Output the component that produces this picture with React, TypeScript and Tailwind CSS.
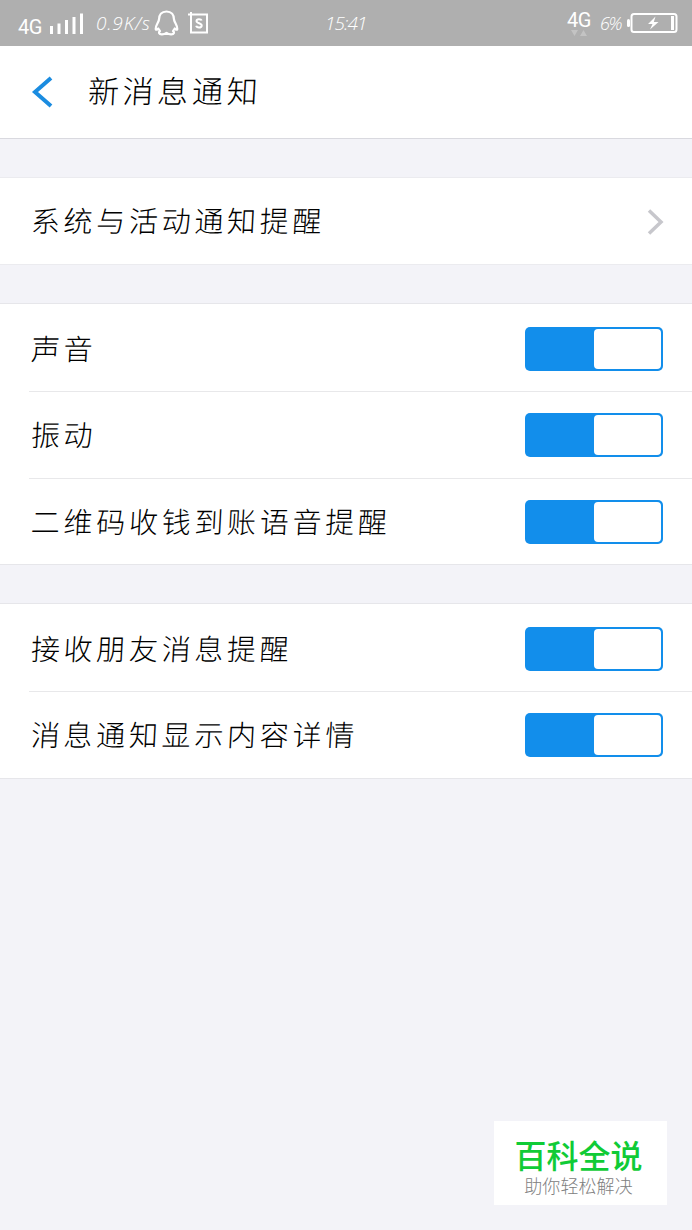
import React from "react";

const cjk = "font-['Noto_Sans_CJK_SC',sans-serif]";

function Toggle() {
  return (
    <button
      type="button"
      role="switch"
      aria-checked="true"
      className="flex h-[44px] w-[138px] justify-end rounded-[5px] bg-[#128eeb] p-[2px]"
    >
      <span className="h-full w-[67px] rounded-[4px] bg-white" />
    </button>
  );
}

function Label({ children }: { children: string }) {
  return (
    <span className="-skew-x-3 whitespace-nowrap pb-[3px] text-[29px] leading-none font-light tracking-[3.7px] text-black">
      {children}
    </span>
  );
}

function Row({ label, className }: { label: string; className: string }) {
  return (
    <div className={`ml-[29px] flex items-center justify-between pr-[29px] pl-[2px] ${className}`}>
      <Label>{label}</Label>
      <Toggle />
    </div>
  );
}

function StatusBar() {
  return (
    <div className="flex h-[46px] shrink-0 items-center bg-[#afafaf] font-['Roboto',sans-serif] text-white">
      <div className="flex w-[325px] items-center pl-[18px]">
        <span className="w-[31px] pt-[7px] text-[20px] leading-none tracking-[-0.5px]">4G</span>
        <svg width="36" height="22" viewBox="0 0 36 22" fill="currentColor" className="shrink-0">
          <rect x="1" y="14" width="3" height="8" />
          <rect x="8.5" y="11.5" width="3" height="10.5" />
          <rect x="16" y="8" width="3" height="14" />
          <rect x="23.5" y="5" width="3" height="17" />
          <rect x="31" y="1.500" width="3" height="20.500" />
        </svg>
        <span className="ml-[11px] w-[58px] whitespace-nowrap font-['Open_Sans',sans-serif] text-[19px] leading-none font-light italic tracking-[0.800px]">
          0.9K/s
        </span>
        <svg width="25" height="26" viewBox="0 0 25 26" fill="none" stroke="currentColor" strokeWidth="2.200" strokeLinejoin="round" className="shrink-0">
          <path d="M12.500 1.500C7.500 1.500 5 5 5 9.500C4.500 13 1.500 15 1.700 19C2 20.500 3.500 19.500 4.300 18.500L6 21C4 22.500 5 24.500 8 24.300C10 24.200 11.500 23.500 12.500 22.800C13.500 23.500 15 24.200 17 24.300C20 24.500 21 22.500 19 21L20.700 18.500C21.500 19.500 23 20.500 23.300 19C23.500 15 20.500 13 20 9.500C20 5 17.500 1.500 12.500 1.500Z" />
        </svg>
        <svg width="21" height="22" viewBox="0 0 21 22" fill="none" stroke="currentColor" strokeWidth="2" className="ml-[9px] shrink-0">
          <path d="M0 2.500H19V20.500H3V0" />
          <path d="M13.700 8.500C13 6.700 8.600 6.500 8.500 9C8.500 11.800 13.800 10.800 13.700 13.600C13.500 16.200 8.700 16 8.200 13.800" />
        </svg>
      </div>
      <span className="w-[242px] pt-px font-['Open_Sans',sans-serif] text-[19px] leading-none font-light italic tracking-[-0.900px]">
        15:41
      </span>
      <div className="flex h-[46px] w-[33px] flex-col pt-[10px]">
        <span className="text-[20px] leading-[20px] tracking-[-0.500px]">4G</span>
        <svg width="20" height="6" viewBox="0 0 20 6" fill="currentColor" className="ml-[3px] opacity-25">
          <path d="M1 0H8L4.500 6ZM10 6L13.500 0L17 6Z" />
        </svg>
      </div>
      <span className="w-[27px] font-['Open_Sans',sans-serif] text-[18px] leading-none font-light italic tracking-[-1.500px]">
        6%
      </span>
      <svg width="51" height="22" viewBox="0 0 51 22" fill="none" className="shrink-0">
        <rect x="0" y="7" width="3" height="8" rx="1.500" fill="currentColor" />
        <rect x="4.500" y="2" width="45" height="18" rx="2.500" stroke="currentColor" strokeWidth="2" />
        <rect x="44" y="4" width="3" height="14" fill="currentColor" />
        <path d="M28.500 4.500L21 12H25.500L23 17.500L31.500 10H26.800Z" fill="currentColor" />
      </svg>
    </div>
  );
}

export default function App() {
  return (
    <div className={`flex h-[1230px] w-[692px] flex-col overflow-hidden bg-[#f3f3f8] ${cjk}`}>
      <StatusBar />
      <header className="flex h-[93px] shrink-0 items-center border-b border-[#d9d9df] bg-white pl-[31px]">
        <svg width="22" height="32" viewBox="0 0 22 32" fill="none" stroke="#1b8ce0" strokeWidth="4" className="shrink-0">
          <path d="M20 2L4 16L20 30" />
        </svg>
        <h1 className="ml-[35px] -skew-x-3 whitespace-nowrap pb-[5px] text-[31px] leading-none font-light tracking-[3.700px] text-black">
          新消息通知
        </h1>
      </header>

      <section className="mt-[38px] flex h-[88px] shrink-0 items-center justify-between border-y border-[#ebebef] bg-white pr-[28px] pl-[31px]">
        <Label>系统与活动通知提醒</Label>
        <svg width="17" height="28" viewBox="0 -2 17 28" fill="none" stroke="#c7c7cc" strokeWidth="3.500" className="shrink-0">
          <path d="M2 1.500L14 13L2 24.500" />
        </svg>
      </section>

      <section className="mt-[38px] shrink-0 border-y border-[#e6e6ea] bg-white">
        <Row label="声音" className="h-[88px] border-b border-[#e8e8ea] pt-[2px]" />
        <Row label="振动" className="h-[87px] border-b border-[#e8e8ea]" />
        <Row label="二维码收钱到账语音提醒" className="h-[85px]" />
      </section>

      <section className="mt-[38px] shrink-0 border-y border-[#e6e6ea] bg-white">
        <Row label="接收朋友消息提醒" className="h-[88px] border-b border-[#e8e8ea] pt-[2px]" />
        <Row label="消息通知显示内容详情" className="h-[86px]" />
      </section>

      <footer className="mt-auto mr-[25px] mb-[25px] flex h-[84px] w-[173px] shrink-0 flex-col items-center self-end bg-white pt-[17px] pr-[4px]">
        <strong className="text-[32px] leading-[32px] font-medium text-[#10cb36]">百科全说</strong>
        <span className="mt-[6px] text-[18px] leading-[18px] font-light tracking-[0.1px] text-[#808080]">助你轻松解决</span>
      </footer>
    </div>
  );
}
